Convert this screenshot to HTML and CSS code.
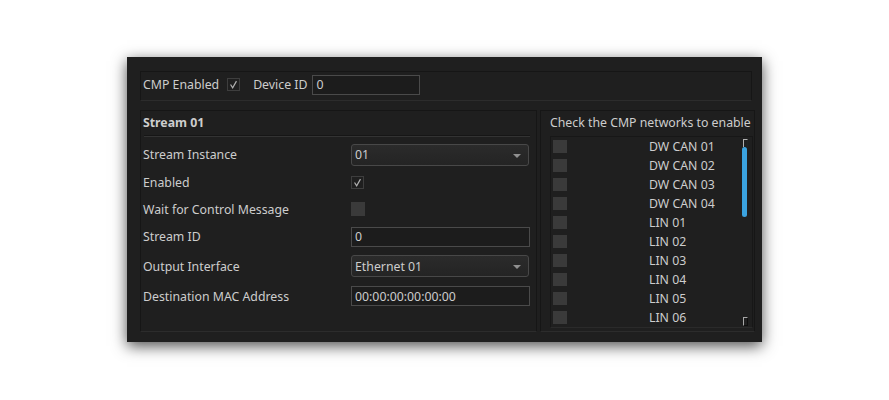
FILE: index.html
```html
<!DOCTYPE html>
<html lang="en">
<head>
    <meta charset="UTF-8">
    <title>CMP Settings</title>
    <link rel="stylesheet" href="styles.css">
</head>
<body>
    <div class="window">
        <!-- global CMP options -->
        <div class="group top-group">
            <span class="label">CMP Enabled</span>
            <span class="check checked"><svg viewBox="0 0 13 13"><polyline points="3,6.5 5.5,10.5 10,2.5"/></svg></span>
            <span class="label device-label">Device ID</span>
            <span class="field device-field">0</span>
        </div>

        <div class="panels">
            <div class="group stream">
                <div class="stream-title">Stream 01</div>
                <div class="rule"></div>

                <div class="row r1">
                    <span class="row-label">Stream Instance</span>
                    <span class="combo">01<i class="arrow"></i></span>
                </div>
                <div class="row r2">
                    <span class="row-label">Enabled</span>
                    <span class="check checked"><svg viewBox="0 0 13 13"><polyline points="3,6.5 5.5,10.5 10,2.5"/></svg></span>
                </div>
                <div class="row r3">
                    <span class="row-label">Wait for Control Message</span>
                    <span class="check"></span>
                </div>
                <div class="row r4">
                    <span class="row-label">Stream ID</span>
                    <span class="field">0</span>
                </div>
                <div class="row r5">
                    <span class="row-label">Output Interface</span>
                    <span class="combo">Ethernet 01<i class="arrow"></i></span>
                </div>
                <div class="row r6">
                    <span class="row-label">Destination MAC Address</span>
                    <span class="field">00:00:00:00:00:00</span>
                </div>
            </div>

            <div class="group networks">
                <div class="net-title">Check the CMP networks to enable</div>
                <div class="net-list">
                    <div class="net-item"><span class="check"></span><span class="net-name">DW CAN 01</span></div>
                    <div class="net-item"><span class="check"></span><span class="net-name">DW CAN 02</span></div>
                    <div class="net-item"><span class="check"></span><span class="net-name">DW CAN 03</span></div>
                    <div class="net-item"><span class="check"></span><span class="net-name">DW CAN 04</span></div>
                    <div class="net-item"><span class="check"></span><span class="net-name">LIN 01</span></div>
                    <div class="net-item"><span class="check"></span><span class="net-name">LIN 02</span></div>
                    <div class="net-item"><span class="check"></span><span class="net-name">LIN 03</span></div>
                    <div class="net-item"><span class="check"></span><span class="net-name">LIN 04</span></div>
                    <div class="net-item"><span class="check"></span><span class="net-name">LIN 05</span></div>
                    <div class="net-item"><span class="check"></span><span class="net-name">LIN 06</span></div>

                    <!-- scrollbar overlays the list -->
                    <span class="scroll-cap top"></span>
                    <span class="scroll-thumb"></span>
                    <span class="scroll-cap bottom"></span>
                </div>
            </div>
        </div>
    </div>
</body>
</html>
```

FILE: styles.css
```css
body {
    margin: 0;
    padding: 57px 0 40px;
    background-color: #fff;
    font-family: "Noto Sans", "Open Sans", sans-serif;
    font-size: 12.3px;
    color: #cdcdcd;
}

.window {
    width: 635px;
    height: 285px;
    box-sizing: border-box;
    margin: 0 auto;
    padding: 14px 7px 11px 13px;
    background-color: #1f1f1f;
    box-shadow: 0 4px 14px rgba(0, 0, 0, 0.7);
}

.group {
    box-sizing: border-box;
    border: 1px solid #161616;
    border-bottom-color: #2c2c2c;
}

.top-group {
    width: 612px;
    height: 30px;
    display: flex;
    align-items: center;
    padding: 0 0 3px 2px;
}

.device-label {
    margin-left: 13px;
    margin-right: 5px;
}

.check {
    display: inline-block;
    width: 14px;
    height: 14px;
    box-sizing: border-box;
    background-color: #3a3a3a;
}

.check.checked {
    width: 13px;
    height: 13px;
    background-color: #1f1f1f;
    border: 1px solid #3e3e3e;
}

.check svg {
    display: block;
    width: 11px;
    height: 11px;
    fill: none;
    stroke: #b0b0b0;
    stroke-width: 1.4;
}

.top-group .check {
    margin-left: 8px;
}

.field {
    display: flex;
    align-items: center;
    width: 179px;
    height: 20px;
    box-sizing: border-box;
    padding-left: 3px;
    border: 1px solid #4a4a4a;
    background-color: #1c1c1c;
}

.device-field {
    width: 108px;
}

.panels {
    display: flex;
    gap: 3px;
    margin-top: 9px;
}

.stream {
    width: 397px;
    height: 222px;
    padding: 0 0 0 2px;
}

.stream-title {
    font-weight: bold;
    height: 24px;
    line-height: 24px;
}

.rule {
    width: 386px;
    height: 1px;
    margin-left: 1px;
    background-color: #333;
    border-top: 1px solid #161616;
    margin-bottom: 4px;
}

.row {
    display: flex;
    align-items: center;
}

.row-label {
    width: 208px;
}

.r1 { height: 27px; }
.r2 { height: 28px; }
.r3 { height: 26px; }
.r4 { height: 29px; }
.r5 { height: 30px; }
.r6 { height: 30px; }

.combo {
    position: relative;
    display: flex;
    align-items: center;
    width: 178px;
    height: 22px;
    box-sizing: border-box;
    padding-left: 3px;
    border: 1px solid #484848;
    border-radius: 3px;
    background: linear-gradient(#2b2b2b, #242424);
}

.arrow {
    position: absolute;
    right: 7px;
    top: 9px;
    border-left: 4px solid transparent;
    border-right: 4px solid transparent;
    border-top: 4px solid #909090;
}

.networks {
    width: 215px;
    height: 222px;
    padding: 0 0 0 9px;
}

.net-title {
    height: 25px;
    line-height: 24px;
    white-space: nowrap;
}

.net-list {
    position: relative;
    width: 203px;
    height: 192px;
    box-sizing: border-box;
    border: 1px solid #171717;
    border-bottom-color: #2a2a2a;
}

.net-item {
    display: flex;
    align-items: center;
    height: 19px;
    padding-left: 2px;
}

.net-item .check {
    width: 14px;
    height: 13px;
}

.net-name {
    margin-left: 82px;
}

.scroll-thumb {
    position: absolute;
    left: 191px;
    top: 10px;
    width: 5px;
    height: 70px;
    border-radius: 3px;
    background-color: #3ba3e0;
}

.scroll-cap {
    position: absolute;
    left: 192px;
    width: 5px;
    height: 8px;
    box-sizing: border-box;
    border: 1px solid #b0b0b0;
}

.scroll-cap.top {
    top: 2px;
    border-bottom: none;
    border-right-color: #222;
}

.scroll-cap.bottom {
    bottom: 1px;
    height: 9px;
    border-color: #a8a8a8 #0e0e0e #0e0e0e #a8a8a8;
}
```
